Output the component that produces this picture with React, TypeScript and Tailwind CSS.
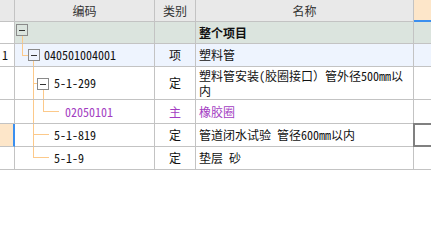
import React from "react";

const FONT = "font-['SimSun','Noto_Sans_CJK_SC',sans-serif]";
const LINE = "#fcc98a";

type Seg = [number, number, number, number]; // x, y, w, h

function Tree({ w, h, segs, box }: { w: number; h: number; segs: Seg[]; box?: [number, number] }) {
  return (
    <svg width={w} height={h} className="shrink-0 overflow-visible" shapeRendering="crispEdges">
      {segs.map(([x, y, sw, sh], i) => (
        <rect key={i} x={x} y={y} width={sw} height={sh} fill={LINE} />
      ))}
      {box && (
        <>
          <rect x={box[0] + 0.5} y={box[1] + 0.5} width={11} height={11} fill="none" stroke="#8a8a8a" />
          <rect x={box[0] + 3} y={box[1] + 6} width={6} height={1} fill="#333" />
        </>
      )}
    </svg>
  );
}

type Row = {
  h: string;
  ch: number;
  bg: string;
  rh: string;
  rhCls: string;
  tw: number;
  segs: Seg[];
  box?: [number, number];
  code: string;
  type: string;
  name: React.ReactNode;
  color: string;
  current?: boolean;
};

export default function App() {
  const rows: Row[] = [
    {
      h: "h-[22px]",
      ch: 21,
      bg: "bg-[#dbe4de]",
      rh: "",
      rhCls: "bg-white border-r border-[#c3c3c3]",
      tw: 14,
      segs: [[7, 14, 1, 7]],
      box: [1, 2],
      code: "",
      type: "",
      name: <span className="font-bold">整个项目</span>,
      color: "text-[#111]",
    },
    {
      h: "h-[23px]",
      ch: 22,
      bg: "bg-[#eef4fe]",
      rh: "1",
      rhCls: "bg-white border-r border-[#c3c3c3]",
      tw: 29,
      segs: [
        [7, 0, 1, 11],
        [7, 11, 6, 1],
        [18, 17, 1, 5],
      ],
      box: [13, 5],
      code: "040501004001",
      type: "项",
      name: "塑料管",
      color: "text-[#111]",
    },
    {
      h: "h-[33px]",
      ch: 32,
      bg: "bg-white",
      rh: "",
      rhCls: "bg-white border-r border-[#c3c3c3]",
      tw: 39,
      segs: [
        [18, 0, 1, 32],
        [18, 16, 4, 1],
        [28, 23, 1, 9],
      ],
      box: [22, 11],
      code: "5-1-299",
      type: "定",
      name: (
        <span className="leading-[15px] block">
          塑料管安装(胶圈接口<span className="[font-feature-settings:normal]">）</span>管外径500mm以内
        </span>
      ),
      color: "text-[#111]",
    },
    {
      h: "h-[24px]",
      ch: 23,
      bg: "bg-white",
      rh: "",
      rhCls: "bg-white border-r border-[#c3c3c3]",
      tw: 50,
      segs: [
        [18, 0, 1, 23],
        [28, 0, 1, 11],
        [28, 11, 16, 1],
      ],
      code: "02050101",
      type: "主",
      name: "橡胶圈",
      color: "text-[#a33dc2]",
    },
    {
      h: "h-[23px]",
      ch: 22,
      bg: "bg-white",
      rh: "",
      rhCls: "bg-[#fde6c9] border-r-2 border-[#3b8fef]",
      current: true,
      tw: 39,
      segs: [
        [18, 0, 1, 22],
        [18, 10, 16, 1],
      ],
      code: "5-1-819",
      type: "定",
      name: "管道闭水试验 管径600mm以内",
      color: "text-[#111]",
    },
    {
      h: "h-[23px]",
      ch: 22,
      bg: "bg-white",
      rh: "",
      rhCls: "bg-white border-r border-[#c3c3c3]",
      tw: 39,
      segs: [
        [18, 0, 1, 11],
        [18, 10, 16, 1],
      ],
      code: "5-1-9",
      type: "定",
      name: "垫层 砂",
      color: "text-[#111]",
    },
  ];

  return (
    <div className={`w-[431px] h-[240px] bg-white overflow-hidden text-[12px] ${FONT} [font-feature-settings:'hwid']`}>
      <div className="flex h-[22px] bg-[#e9e9e9] text-[#333]">
        <div className="w-[15px] shrink-0 border-r border-b border-[#c3c3c3]" />
        <div className="w-[140px] shrink-0 border-r border-b border-[#c3c3c3] flex items-center justify-center">编码</div>
        <div className="w-[41px] shrink-0 border-r border-b border-[#c3c3c3] flex items-center justify-center">类别</div>
        <div className="w-[218px] shrink-0 border-r border-b border-[#c3c3c3] flex items-center justify-center">名称</div>
        <div className="flex-1 bg-[#fde6c9] border-b-2 border-[#3b8fef]" />
      </div>
      {rows.map((r, i) => (
        <div key={i} className={`flex ${r.h} ${r.color}`}>
          <div className={`w-[15px] shrink-0 border-b border-b-[#c3c3c3] flex items-center pl-[2px] text-[#111] ${r.rhCls}`}>
            {r.rh}
          </div>
          <div className={`w-[140px] shrink-0 border-r border-b border-[#c3c3c3] flex items-center ${r.bg}`}>
            <Tree w={r.tw} h={r.ch} segs={r.segs} box={r.box} />
            <span>{r.code}</span>
          </div>
          <div className={`w-[41px] shrink-0 border-r border-b border-[#c3c3c3] flex items-center justify-center ${r.bg}`}>
            {r.type}
          </div>
          <div className={`w-[218px] shrink-0 border-r border-b border-[#c3c3c3] flex items-center pl-[3px] pr-[8px] ${r.bg}`}>
            {r.name}
          </div>
          <div className={`flex-1 border-b border-[#c3c3c3] relative ${r.bg}`}>
            {r.current && (
              <div className="absolute -left-[1px] -top-[1px] right-0 -bottom-[1px] border-2 border-r-0 border-[#808080]" />
            )}
          </div>
        </div>
      ))}
    </div>
  );
}
